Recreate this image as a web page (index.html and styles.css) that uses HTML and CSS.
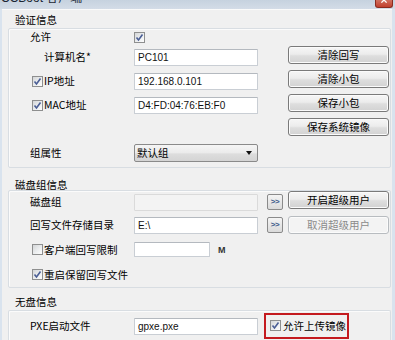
FILE: index.html
```html
<!DOCTYPE html>
<html lang="zh-CN">
<head>
<meta charset="utf-8">
<title>CCBoot 客户端</title>
<link rel="stylesheet" href="styles.css">
</head>
<body>
<div class="win">
  <div class="titlebar">
    <span class="title">CCBoot 客户端</span>
    <span class="close"><svg viewBox="0 0 18 8"><path d="M6 -3 L12 3 M12 -3 L6 3"/></svg></span>
  </div>
  <div class="client">
    <div class="sec-title t1">验证信息</div>
    <div class="box box1">
      <div class="lbl l-plain">允许</div>
      <div class="cell"><span class="cb on"><svg viewBox="0 0 9 9"><path d="M1.5 4.5 L3.5 7 L7.5 1.5"/></svg></span></div>

      <div class="lbl l-indent">计算机名*</div>
      <div class="cell"><div class="input">PC101</div></div>
      <div class="bcell"><div class="btn">清除回写</div></div>

      <div class="lbl l-check"><span class="cb on"><svg viewBox="0 0 9 9"><path d="M1.5 4.5 L3.5 7 L7.5 1.5"/></svg></span><span>IP地址</span></div>
      <div class="cell"><div class="input">192.168.0.101</div></div>
      <div class="bcell"><div class="btn">清除小包</div></div>

      <div class="lbl l-check"><span class="cb on"><svg viewBox="0 0 9 9"><path d="M1.5 4.5 L3.5 7 L7.5 1.5"/></svg></span><span>MAC地址</span></div>
      <div class="cell"><div class="input">D4:FD:04:76:EB:F0</div></div>
      <div class="bcell"><div class="btn">保存小包</div></div>

      <div class="lbl"></div>
      <div class="cell"></div>
      <div class="bcell"><div class="btn">保存系统镜像</div></div>

      <div class="lbl l-plain">组属性</div>
      <div class="cell"><div class="combo"><span>默认组</span><span class="arrow"></span></div></div>
    </div>

    <div class="sec-title t2">磁盘组信息</div>
    <div class="box box2">
      <div class="lbl l-plain">磁盘组</div>
      <div class="cell"><div class="input disabled"></div></div>
      <div class="gcell"><div class="more">&gt;&gt;</div></div>
      <div class="bcell up"><div class="btn">开启超级用户</div></div>

      <div class="lbl l-plain">回写文件存储目录</div>
      <div class="cell"><div class="input">E:\</div></div>
      <div class="gcell"><div class="more">&gt;&gt;</div></div>
      <div class="bcell"><div class="btn off">取消超级用户</div></div>

      <div class="lbl l-check"><span class="cb"></span><span>客户端回写限制</span></div>
      <div class="cell"><div class="input short"></div><span class="unit">M</span></div>

      <div class="lbl l-check wide"><span class="cb on"><svg viewBox="0 0 9 9"><path d="M1.5 4.5 L3.5 7 L7.5 1.5"/></svg></span><span>重启保留回写文件</span></div>
    </div>

    <div class="sec-title t3">无盘信息</div>
    <div class="box box3">
      <div class="lbl l-plain">PXE启动文件</div>
      <div class="cell"><div class="input">gpxe.pxe</div></div>
      <div class="hl"><span class="cb on"><svg viewBox="0 0 9 9"><path d="M1.5 4.5 L3.5 7 L7.5 1.5"/></svg></span><span>允许上传镜像</span></div>
    </div>
  </div>
</div>
</body>
</html>
```

FILE: styles.css
```css
* { box-sizing: border-box; margin: 0; padding: 0; }
html, body { width: 395px; height: 340px; overflow: hidden; }
body {
  background: #f0f0f0;
  font-family: "Noto Sans CJK SC", "Noto Sans", sans-serif;
  font-size: 10.5px;
  color: #000;
}
.win {
  width: 395px;
  height: 340px;
  display: flex;
  flex-direction: column;
  background: #d9e3ee;
}
.titlebar {
  height: 9px;
  flex: none;
  display: flex;
  justify-content: space-between;
  align-items: flex-start;
  overflow: hidden;
  background: linear-gradient(#c6d2df, #d3dce7);
}
.title {
  margin-top: -10px;
  margin-left: 1px;
  font-family: "Liberation Sans", "Noto Sans CJK SC", sans-serif;
  font-size: 12px;
  line-height: 16px;
  color: #1b2633;
}
.close {
  width: 18px;
  height: 8px;
  margin-right: 2px;
  background: linear-gradient(#d0705f, #c2402e);
  border: 1px solid #8a2c20;
  border-top: none;
  border-radius: 0 0 3px 3px;
  overflow: hidden;
  display: flex;
}
.close svg { width: 16px; height: 7px; }
.close path { stroke: #fff; stroke-width: 1.6; fill: none; }
.client {
  flex: 1;
  margin: 0 3px 0 2px;
  background: #f0f0f0;
  border-top: 1px solid #fafafa;
  display: flex;
  flex-direction: column;
}
.sec-title {
  flex: none;
  padding-left: 13px;
  line-height: 12px;
}
.t1 { height: 18px; padding-top: 4px; }
.t2 { height: 22px; padding-top: 11px; }
.t3 { height: 22px; padding-top: 8px; }

.box {
  flex: none;
  margin: 0 1px 0 6px;
  border: 1px solid #d8dde2;
  border-radius: 2px;
  box-shadow: inset 1px 1px 0 #fbfbfb;
  display: grid;
  grid-template-columns: 125px 124px 30px 101px;
  align-items: center;
}
.box1 { grid-template-rows: 16px repeat(5, 24px); padding-bottom: 2px; }
.box2 { grid-template-rows: 22px 24px 25px 25px; }
.box3 { grid-template-rows: 24px; padding-top: 3px; flex: 1; align-content: start; border-bottom: none; border-radius: 2px 2px 0 0; }

.lbl {
  grid-column: 1;
  display: flex;
  align-items: center;
  white-space: nowrap;
  line-height: 12px;
}
.l-plain { padding-left: 21px; }
.l-indent { padding-left: 35px; }
.l-check { padding-left: 23px; gap: 1px; }
.l-check.wide { grid-column: 1 / 3; }
.cell { grid-column: 2; display: flex; align-items: center; }
.gcell { grid-column: 3; display: flex; padding-left: 9px; }
.bcell { grid-column: 4; align-self: start; margin-top: 1px; }
.bcell.up { align-self: center; margin-top: -5px; }
.box2 .bcell:not(.up) { align-self: center; margin-top: 0; }

.input {
  width: 124px;
  height: 17px;
  background: #fff;
  border: 1px solid #c9ced4;
  border-top-color: #b4b9bf;
  border-radius: 1px;
  font-family: "Liberation Sans", "DejaVu Sans", sans-serif;
  font-size: 10px;
  line-height: 15px;
  padding-left: 3px;
  color: #111;
}
.input.disabled { background: #f3f3f3; border-color: #dadada; }
.input.short { width: 76px; height: 15px; }
.unit {
  margin-left: 8px;
  font-family: "Liberation Sans", sans-serif;
  font-size: 9px;
  font-weight: bold;
  color: #333;
}

.btn {
  width: 101px;
  height: 18px;
  border: 1px solid #7a7a7a;
  border-radius: 3px;
  background: linear-gradient(#f6f6f6 0%, #ececec 45%, #dedede 55%, #d2d2d2 100%);
  box-shadow: inset 0 0 0 1px #fbfbfb;
  text-align: center;
  line-height: 16px;
  white-space: nowrap;
}
.btn.off {
  border-color: #b8bcc0;
  background: #f3f3f3;
  color: #8a8a8a;
}
.more {
  width: 16px;
  height: 16px;
  border: 1px solid #8a8a8a;
  border-radius: 2px;
  background: linear-gradient(#f4f4f4, #dadada);
  font-family: "Liberation Sans", sans-serif;
  font-size: 8px;
  font-weight: bold;
  line-height: 14px;
  text-align: center;
  letter-spacing: -0.5px;
  color: #3d5a8a;
}
.combo {
  width: 125px;
  height: 18px;
  border: 1px solid #8a8a8a;
  border-radius: 2px;
  background: linear-gradient(#f5f5f5 0%, #ebebeb 50%, #dddddd 55%, #d4d4d4 100%);
  display: flex;
  align-items: center;
  justify-content: space-between;
  padding: 0 5px 0 2px;
  line-height: 12px;
}
.arrow {
  width: 0;
  height: 0;
  border-left: 3px solid transparent;
  border-right: 3px solid transparent;
  border-top: 4px solid #111;
}

.cb {
  width: 11px;
  height: 11px;
  flex: none;
  border: 1px solid #8e8f8f;
  background: linear-gradient(135deg, #d4d6d8 0%, #eef0f1 60%, #fdfdfd 100%);
  display: inline-flex;
  align-items: center;
  justify-content: center;
}
.cb svg { width: 9px; height: 9px; }
.cb path { fill: none; stroke: #4a5e95; stroke-width: 1.6; }

.hl {
  grid-column: 3 / 5;
  justify-self: start;
  margin-left: 6px;
  width: 85px;
  height: 26px;
  border: 2px solid #c41a1f;
  display: flex;
  align-items: center;
  gap: 2px;
  padding-left: 4px;
  white-space: nowrap;
  margin-top: -1px;
}
```
